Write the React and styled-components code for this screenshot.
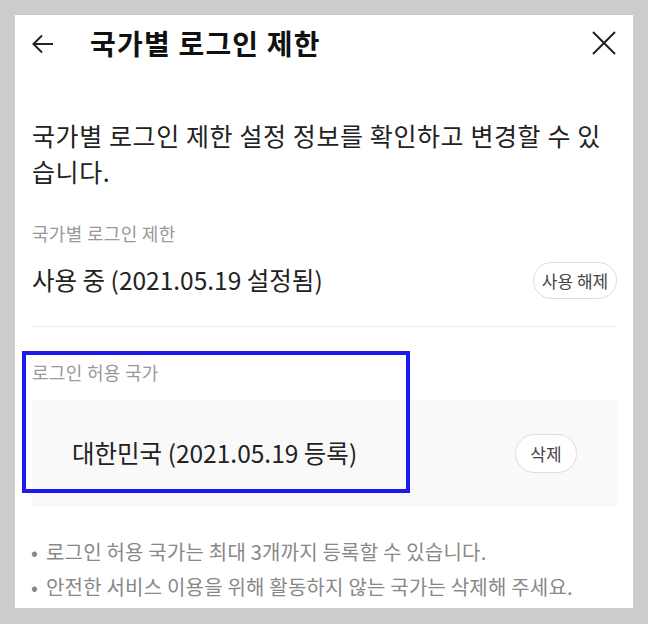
import styled, { createGlobalStyle } from 'styled-components';

const GlobalStyle = createGlobalStyle`
  html, body {
    margin: 0;
    padding: 0;
    background-color: #cccccc;
  }
  body {
    font-family: "Noto Sans CJK KR", "Noto Sans", sans-serif;
    color: #222222;
  }
`;

const notices = [
  '로그인 허용 국가는 최대 3개까지 등록할 수 있습니다.',
  '안전한 서비스 이용을 위해 활동하지 않는 국가는 삭제해 주세요.',
];

const App = () => {
  return (
    <>
      <GlobalStyle />
      <Panel>
        <Header>
          <IconButton aria-label='back'>
            <svg width='22' height='20' viewBox='0 0 22 20' fill='none'>
              <path
                d='M21 10H2M10 1.5L1.5 10L10 18.5'
                stroke='#222'
                strokeWidth='2'
              />
            </svg>
          </IconButton>
          <Title>국가별 로그인 제한</Title>
          <IconButton aria-label='close' $right>
            <svg width='24' height='24' viewBox='0 0 24 24' fill='none'>
              <path d='M1 1L23 23M23 1L1 23' stroke='#222' strokeWidth='2' />
            </svg>
          </IconButton>
        </Header>

        <Description>
          국가별 로그인 제한 설정 정보를 확인하고 변경할 수 있
          <br />
          습니다.
        </Description>

        <Label $top={32}>국가별 로그인 제한</Label>
        <StatusRow>
          <StatusText>사용 중 (2021.05.19 설정됨)</StatusText>
          <PillButton $width={84}>사용 해제</PillButton>
        </StatusRow>
        <Divider />

        <Label $top={33}>로그인 허용 국가</Label>
        <CountryRow>
          <StatusText>대한민국 (2021.05.19 등록)</StatusText>
          <PillButton $width={62} $height={39}>삭제</PillButton>
        </CountryRow>

        <NoticeList>
          {notices.map((notice) => (
            <li key={notice}>{notice}</li>
          ))}
        </NoticeList>

        <Highlight />
      </Panel>
    </>
  );
};

const Panel = styled.div`
  position: relative;
  box-sizing: border-box;
  margin: 15px 15px 16px;
  height: 593px;
  padding: 0 15px 0 17px;
  background-color: #ffffff;
  overflow: hidden;
`;

const Header = styled.div`
  display: flex;
  align-items: center;
  height: 56px;
`;

const IconButton = styled.div`
  display: flex;
  align-items: center;
  justify-content: center;
  margin-left: ${(props) => (props.$right ? 'auto' : '0')};
  margin-right: ${(props) => (props.$right ? '2px' : '0')};
  margin-top: ${(props) => (props.$right ? '-1px' : '2px')};
`;

const Title = styled.h1`
  margin: 0 0 0 36px;
  font-size: 28px;
  font-weight: 700;
  line-height: 1;
  letter-spacing: 1.2px;
  color: #111111;
`;

const Description = styled.p`
  margin: 46px 0 0;
  font-size: 25px;
  line-height: 36px;
  font-weight: 400;
  letter-spacing: 0.6px;
  color: #222222;
`;

const Label = styled.div`
  margin-top: ${(props) => props.$top}px;
  font-size: 18px;
  line-height: 24px;
  letter-spacing: 0.3px;
  color: #999999;
`;

const StatusRow = styled.div`
  display: flex;
  align-items: center;
  justify-content: space-between;
  height: 37px;
  margin-top: 17px;
  margin-right: 1px;
`;

const StatusText = styled.span`
  font-size: 24.5px;
  line-height: 1;
  color: #222222;
`;

const PillButton = styled.button`
  box-sizing: border-box;
  width: ${(props) => props.$width}px;
  height: ${(props) => props.$height || 37}px;
  padding: 0;
  border: 1px solid #dddddd;
  border-radius: 20px;
  background-color: #ffffff;
  font-family: inherit;
  font-size: 17px;
  color: #444444;
  cursor: pointer;
`;

const Divider = styled.hr`
  margin: 27px 0 0;
  border: none;
  border-top: 1px solid #eeeeee;
`;

const CountryRow = styled.div`
  display: flex;
  align-items: center;
  justify-content: space-between;
  height: 107px;
  margin-top: 16px;
  margin-right: 1px;
  padding: 0 40px;
  background-color: #f9f9f9;
`;

const NoticeList = styled.ul`
  margin: 27px 0 0;
  padding: 0;
  list-style: none;
  font-size: 20px;
  line-height: 35px;
  letter-spacing: 0.2px;
  color: #888888;

  li::before {
    content: '•';
    display: inline-block;
    width: 15px;
    margin-left: -1px;
    letter-spacing: 0;
  }
`;

const Highlight = styled.div`
  position: absolute;
  left: 7px;
  top: 336px;
  width: 388px;
  height: 142px;
  box-sizing: border-box;
  border: 4px solid #1a1af0;
  pointer-events: none;
`;

export default App;
